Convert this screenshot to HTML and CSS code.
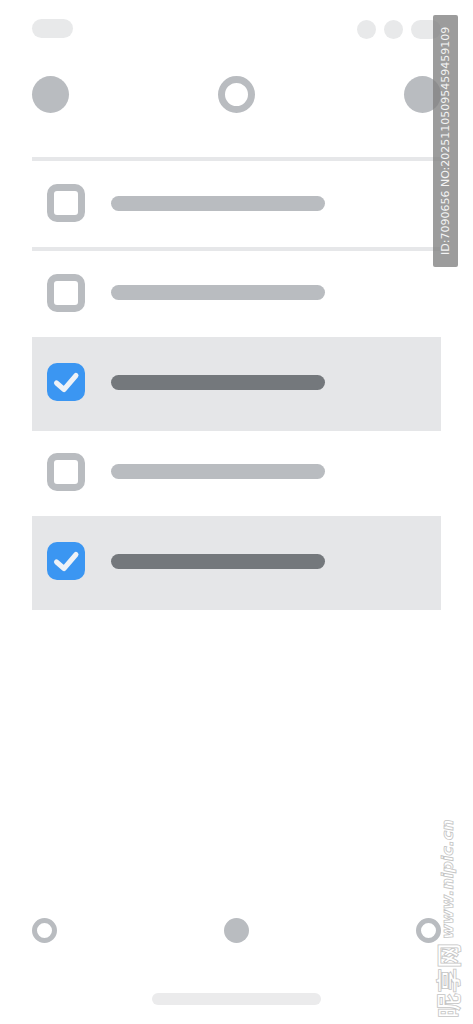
FILE: index.html
```html
<!DOCTYPE html>
<html>
<head>
<meta charset="utf-8">
<link rel="stylesheet" href="styles.css">
</head>
<body>
<div class="screen">
  <div class="status">
    <div class="pill-left"></div>
    <div class="status-right">
      <div class="dot"></div>
      <div class="dot"></div>
      <div class="pill-right"></div>
    </div>
  </div>
  <div class="topbar">
    <div class="circle"></div>
    <div class="ring"></div>
    <div class="circle"></div>
  </div>
  <div class="list">
    <div class="divider"></div>
    <div class="row r1"><div class="box"></div><div class="bar"></div></div>
    <div class="divider"></div>
    <div class="row r2"><div class="box"></div><div class="bar"></div></div>
    <div class="row sel"><div class="box checked"><svg viewBox="0 0 38 38" width="38" height="38"><path d="M9.5 20 L17 26.5 L29 12.5" fill="none" stroke="#eef2f7" stroke-width="5" stroke-linecap="round" stroke-linejoin="round"/></svg></div><div class="bar dark"></div></div>
    <div class="row r4"><div class="box"></div><div class="bar"></div></div>
    <div class="row sel"><div class="box checked"><svg viewBox="0 0 38 38" width="38" height="38"><path d="M9.5 20 L17 26.5 L29 12.5" fill="none" stroke="#eef2f7" stroke-width="5" stroke-linecap="round" stroke-linejoin="round"/></svg></div><div class="bar dark"></div></div>
  </div>
  <div class="spacer"></div>
  <div class="nav">
    <div class="nring"></div>
    <div class="ndot"></div>
    <div class="nring"></div>
  </div>
  <div class="home"><div class="home-bar"></div></div>
</div>
<div class="wm-id">ID:7090656 NO:20251105095459459109</div>
<div class="wm-site"><span class="cn">昵享网</span><span class="url">www.nipic.cn</span></div>
</body>
</html>
```
FILE: styles.css
```css
html, body {
  margin: 0;
  padding: 0;
  background: #ffffff;
  font-family: "DejaVu Sans", "Noto Sans CJK SC", sans-serif;
}
.screen {
  width: 473px;
  height: 1024px;
  display: flex;
  flex-direction: column;
  box-sizing: border-box;
  padding: 19px 32px 0 32px;
}
.status {
  display: flex;
  justify-content: space-between;
  align-items: flex-start;
  height: 19px;
}
.pill-left {
  width: 41px;
  height: 19px;
  border-radius: 10px;
  background: #e8e9ea;
}
.status-right {
  display: flex;
  gap: 8px;
  margin-top: 1px;
}
.dot {
  width: 19px;
  height: 19px;
  border-radius: 50%;
  background: #e8e9ea;
}
.pill-right {
  width: 30px;
  height: 19px;
  border-radius: 10px;
  background: #e8e9ea;
}
.topbar {
  margin-top: 38px;
  display: flex;
  justify-content: space-between;
  align-items: center;
}
.circle {
  width: 37px;
  height: 37px;
  border-radius: 50%;
  background: #b9bcc0;
}
.ring {
  width: 37px;
  height: 37px;
  box-sizing: border-box;
  border-radius: 50%;
  border: 7px solid #b9bcc0;
}
.list {
  margin-top: 44px;
  display: flex;
  flex-direction: column;
}
.divider {
  height: 4px;
  background: #e6e7e9;
}
.row {
  display: flex;
  align-items: center;
  gap: 26px;
  padding-left: 15px;
  box-sizing: border-box;
}
.r1 { height: 86px; padding-bottom: 2px; }
.r2 { height: 86px; padding-bottom: 3px; }
.r4 { height: 85px; padding-bottom: 4px; }
.sel {
  height: 94px;
  padding-bottom: 4px;
  background: #e5e6e8;
}
.box {
  width: 38px;
  height: 38px;
  box-sizing: border-box;
  border-radius: 10px;
  border: 7px solid #b9bcc0;
  background: #ffffff;
  flex: none;
}
.box.checked {
  border: none;
  background: #3b96f2;
}
.box.checked svg { display: block; }
.bar {
  width: 214px;
  height: 15px;
  border-radius: 8px;
  background: #b9bcc0;
}
.bar.dark { background: #74787c; }
.spacer { flex: 1; }
.nav {
  display: flex;
  justify-content: space-between;
  align-items: center;
}
.nring {
  width: 25px;
  height: 25px;
  box-sizing: border-box;
  border-radius: 50%;
  border: 5px solid #b9bcc0;
}
.ndot {
  width: 25px;
  height: 25px;
  border-radius: 50%;
  background: #b9bcc0;
}
.home {
  display: flex;
  justify-content: center;
  margin-top: 50px;
  height: 31px;
}
.home-bar {
  width: 169px;
  height: 12px;
  border-radius: 6px;
  background: #ebebec;
}
.wm-id {
  position: absolute;
  left: 433px;
  top: 15px;
  width: 25px;
  height: 252px;
  box-sizing: border-box;
  background: rgba(128, 128, 128, 0.78);
  border-radius: 2px;
  color: #f4f4f4;
  font-family: "DejaVu Sans", sans-serif;
  font-size: 11px;
  writing-mode: vertical-rl;
  transform: rotate(180deg);
  display: flex;
  align-items: center;
  justify-content: center;
  white-space: nowrap;
}
.wm-site {
  position: absolute;
  left: 435px;
  top: 808px;
  height: 210px;
  writing-mode: vertical-rl;
  text-orientation: sideways;
  transform: rotate(180deg);
  color: transparent;
  -webkit-text-stroke: 0.8px #c4c4c4;
  white-space: nowrap;
  font-family: "Noto Sans CJK SC", "DejaVu Sans", sans-serif;
  font-weight: bold;
  display: flex;
  align-items: center;
  gap: 4px;
}
.wm-site .cn { font-size: 25px; line-height: 25px; }
.wm-site .url { font-style: italic; font-family: "DejaVu Sans", sans-serif; font-size: 16px; line-height: 20px; }
```
